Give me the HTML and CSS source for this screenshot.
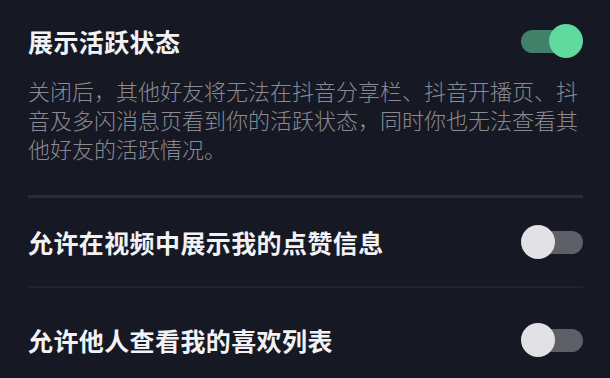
FILE: index.html
```html
<!DOCTYPE html>
<html lang="zh-CN">
<head>
<meta charset="utf-8">
<link rel="stylesheet" href="styles.css">
</head>
<body>
<div class="page">
  <section class="block">
    <div class="row row-head">
      <div class="label">展示活跃状态</div>
      <div class="switch on"><span class="track"></span><span class="knob"></span></div>
    </div>
    <p class="desc">关闭后，其他好友将无法在抖音分享栏、抖音开播页、抖音及多闪消息页看到你的活跃状态，同时你也无法查看其他好友的活跃情况。</p>
  </section>
  <div class="divider thick"></div>
  <div class="row row-a">
    <div class="label">允许在视频中展示我的点赞信息</div>
    <div class="switch off"><span class="track"></span><span class="knob"></span></div>
  </div>
  <div class="divider thin"></div>
  <div class="row row-b">
    <div class="label">允许他人查看我的喜欢列表</div>
    <div class="switch off"><span class="track"></span><span class="knob"></span></div>
  </div>
</div>
</body>
</html>
```
FILE: styles.css
```css
html, body {
  margin: 0;
  padding: 0;
  background: #161823;
  height: 100%;
  overflow: hidden;
}
.page {
  padding: 0 27px 0 28px;
  font-family: "Noto Sans CJK SC", "Noto Sans", sans-serif;
}
.block {
  padding-top: 25px;
}
.row {
  display: flex;
  align-items: center;
  justify-content: space-between;
}
.row-head {
  height: 32px;
}
.label {
  color: #f2f2f4;
  font-size: 25px;
  font-weight: 700;
  line-height: 32px;
  letter-spacing: 0.4px;
}
.desc {
  margin: 19px 0 0;
  color: #8a8b92;
  font-size: 22px;
  line-height: 29px;
  font-weight: 300;
}
.divider.thick {
  margin-top: 32px;
  height: 3px;
  background: #2b2d36;
}
.divider.thin {
  height: 2px;
  background: #22242d;
}
.row-a {
  height: 88px;
}
.row-b {
  padding-top: 35px;
  height: 34px;
}
.switch {
  position: relative;
  width: 62px;
  height: 35px;
  flex: none;
}
.switch .track {
  position: absolute;
  top: 6px;
  height: 23px;
  border-radius: 12px;
}
.switch .knob {
  position: absolute;
  top: 0;
  width: 34px;
  height: 34px;
  border-radius: 50%;
}
.switch.on .track {
  left: 0;
  right: 3px;
  background: #42806a;
}
.switch.on .knob {
  right: 0;
  background: #5fd99c;
}
.switch.off .track {
  left: 4px;
  right: 0;
  background: #5e5f67;
}
.switch.off .knob {
  left: 0;
  background: #e2e2e6;
}
```
